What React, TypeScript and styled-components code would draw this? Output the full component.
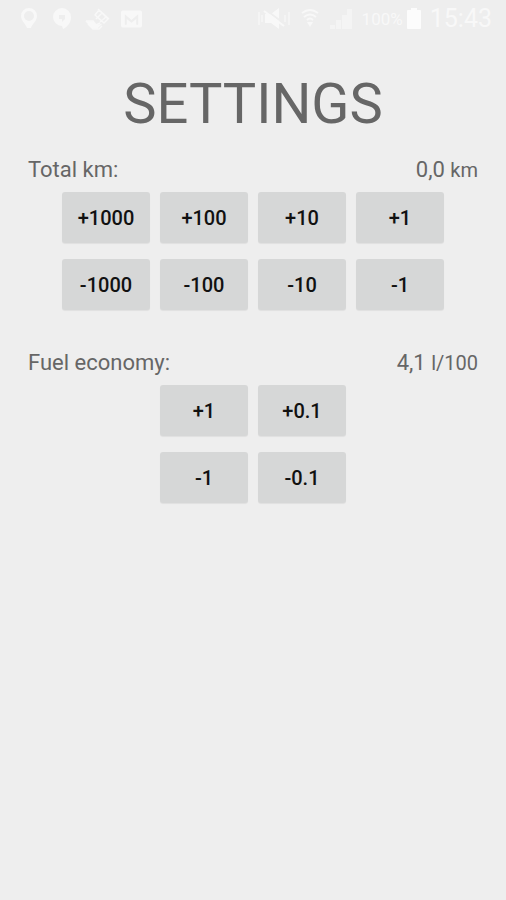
import React, { useState } from "react";
import styled, { createGlobalStyle } from "styled-components";

const GlobalStyle = createGlobalStyle`
  *, *::before, *::after { box-sizing: border-box; }
  body {
    margin: 0;
    background: #eeeeee;
    color: #666666;
    font-family: Roboto, "Liberation Sans", sans-serif;
  }
`;

const Screen = styled.div`
  min-height: 100vh;
  display: flex;
  flex-direction: column;
  background: #eeeeee;
`;

const StatusBar = styled.header`
  display: flex;
  align-items: center;
  justify-content: space-between;
  height: 38px;
  padding: 0 14px 0 18px;
  color: #f8f8f8;
`;

const StatusGroup = styled.div<{ $gap: number }>`
  display: flex;
  align-items: center;
  gap: ${(p) => p.$gap}px;
`;

const Charge = styled.span`
  font-size: 17px;
  line-height: 24px;
`;

const Clock = styled.time`
  font-size: 25px;
  line-height: 32px;
  font-weight: 400;
`;

const Content = styled.main`
  display: flex;
  flex-direction: column;
  padding: 34px 28px 0;
`;

const Title = styled.h1`
  margin: 0;
  font-size: 56px;
  line-height: 64px;
  font-weight: 400;
  text-align: center;
`;

const Section = styled.section`
  display: flex;
  flex-direction: column;
  gap: 7px;
  padding-top: 19px;

  & + & {
    padding-top: 38px;
  }
`;

const SectionHeader = styled.div`
  display: flex;
  align-items: baseline;
  justify-content: space-between;
  font-size: 22px;
  line-height: 30px;
`;

const Label = styled.h2`
  margin: 0;
  font: inherit;
`;

const Value = styled.output``;

const Unit = styled.span`
  font-size: 20px;
`;

const ButtonGrid = styled.div<{ $columns: number }>`
  display: grid;
  grid-template-columns: repeat(${(p) => p.$columns}, 88px);
  justify-content: center;
  gap: 16px 10px;
`;

const StepButton = styled.button`
  height: 51px;
  padding: 0;
  border: 0;
  border-radius: 3px;
  background: #d6d7d7;
  box-shadow: 0 1px 1px rgba(0, 0, 0, 0.06);
  color: #111111;
  font-family: inherit;
  font-size: 20px;
  line-height: 24px;
  font-weight: 500;
  cursor: pointer;

  &:active {
    background: #c5c6c6;
  }
`;

const PinIcon = () => (
  <svg width="22" height="24" viewBox="0 0 22 24" fill="currentColor" aria-hidden="true">
    <path fillRule="evenodd" d="M11 1a8 8 0 0 0-8 8c0 5 5 8 6 12h4c1-4 6-7 6-12a8 8 0 0 0-8-8Zm0 3a5 5 0 1 1 0 10 5 5 0 0 1 0-10Z" />
  </svg>
);

const BubbleIcon = () => (
  <svg width="22" height="24" viewBox="0 0 22 24" fill="currentColor" aria-hidden="true">
    <path fillRule="evenodd" d="M11 1a9 9 0 1 0 0 18l1 3c4-2 8-6 8-12a9 9 0 0 0-9-9ZM8 8h6v4l-3 3v-3H8Z" />
  </svg>
);

const DishIcon = () => (
  <svg width="26" height="24" viewBox="0 0 26 24" fill="none" stroke="currentColor" strokeWidth="1.4" aria-hidden="true">
    <path d="M14 2l11 10M11 8l4-5 9 9-4 4-9-8ZM12 12l6-6M16 15l6-5" />
    <path d="M2 14h7l3 4 4-2M4 17l5 5h6l3-3" />
    <path d="M3 15h6l3 4 4-1-3 3H9Z" fill="currentColor" />
  </svg>
);

const MailIcon = () => (
  <svg width="21" height="18" viewBox="0 0 22 18" fill="currentColor" aria-hidden="true">
    <path fillRule="evenodd" d="M2 0h18a2 2 0 0 1 2 2v14a2 2 0 0 1-2 2H2a2 2 0 0 1-2-2V2a2 2 0 0 1 2-2Zm2 4v11h2V9l5 4 5-4v6h2V4l-7 6-7-6Z" />
  </svg>
);

const MutedIcon = () => (
  <svg width="34" height="24" viewBox="0 0 34 24" aria-hidden="true">
    <path d="M8 7h6l8-6v21l-8-6H8Z" fill="currentColor" />
    <path d="M2 5v13M5 8v7M28 8v7M32 5v13" fill="none" stroke="currentColor" strokeWidth="1.3" />
    <path d="M9 3l20 15" stroke="#eeeeee" strokeWidth="2" />
    <path d="M7 4l20 15" stroke="currentColor" strokeWidth="2" />
  </svg>
);

const WifiIcon = () => (
  <svg width="20" height="22" viewBox="0 0 20 22" fill="none" stroke="currentColor" strokeWidth="2" aria-hidden="true">
    <path d="M2 5q8-6 16 0M4 9q6-5 12 0M7 12q3-3 6 0" />
    <path d="M7 14h6l-3 5Z" fill="currentColor" stroke="none" />
  </svg>
);

const SignalIcon = () => (
  <svg width="24" height="22" viewBox="0 0 24 22" fill="currentColor" aria-hidden="true">
    <path d="M1 17h5v4H1ZM7 12h5v9H7ZM13 7h5v14h-5ZM18 1h5v20h-5Z" opacity="0.6" />
  </svg>
);

const BatteryIcon = () => (
  <svg width="14" height="22" viewBox="0 0 14 22" fill="#fcfcfc" aria-hidden="true">
    <path d="M4 0h6v2h3a1 1 0 0 1 1 1v17a1 1 0 0 1-1 1H1a1 1 0 0 1-1-1V3a1 1 0 0 1 1-1h3Z" />
  </svg>
);

type Setting = {
  label: string;
  unit: string;
  initial: number;
  columns: number;
  steps: string[];
};

const settings: Setting[] = [
  {
    label: "Total km:",
    unit: "km",
    initial: 0,
    columns: 4,
    steps: ["+1000", "+100", "+10", "+1", "-1000", "-100", "-10", "-1"],
  },
  {
    label: "Fuel economy:",
    unit: "l/100",
    initial: 4.1,
    columns: 2,
    steps: ["+1", "+0.1", "-1", "-0.1"],
  },
];

function SettingSection({ label, unit, initial, columns, steps }: Setting) {
  const [value, setValue] = useState(initial);
  const change = (step: string) => setValue((v) => Math.max(0, v + Number(step)));

  return (
    <Section aria-label={label}>
      <SectionHeader>
        <Label>{label}</Label>
        <Value>
          {value.toFixed(1).replace(".", ",")} <Unit>{unit}</Unit>
        </Value>
      </SectionHeader>
      <ButtonGrid $columns={columns}>
        {steps.map((step) => (
          <StepButton key={step} type="button" onClick={() => change(step)}>
            {step}
          </StepButton>
        ))}
      </ButtonGrid>
    </Section>
  );
}

export default function App() {
  return (
    <Screen>
      <GlobalStyle />
      <StatusBar>
        <StatusGroup $gap={11}>
          <PinIcon />
          <BubbleIcon />
          <DishIcon />
          <MailIcon />
        </StatusGroup>
        <StatusGroup $gap={9}>
          <StatusGroup $gap={9}>
            <MutedIcon />
            <WifiIcon />
            <SignalIcon />
          </StatusGroup>
          <StatusGroup $gap={4}>
            <Charge>100%</Charge>
            <BatteryIcon />
          </StatusGroup>
          <Clock>15:43</Clock>
        </StatusGroup>
      </StatusBar>
      <Content>
        <Title>SETTINGS</Title>
        {settings.map((setting) => (
          <SettingSection key={setting.label} {...setting} />
        ))}
      </Content>
    </Screen>
  );
}
